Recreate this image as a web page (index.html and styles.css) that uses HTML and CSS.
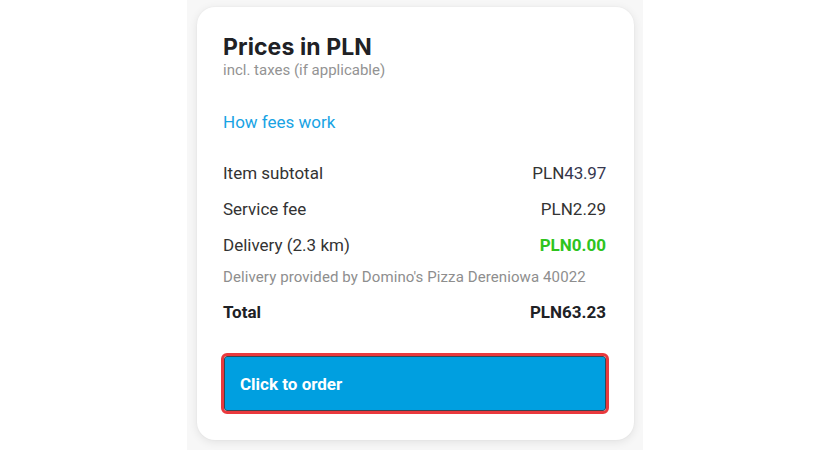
FILE: index.html
```html
<!DOCTYPE html>
<html lang="en">
<head>
<meta charset="utf-8">
<title>Prices in PLN</title>
<link rel="stylesheet" href="styles.css">
</head>
<body>
<div class="panel">
  <section class="card">
    <header class="head">
      <h1 class="title">Prices in PLN</h1>
      <p class="subtitle">incl. taxes (if applicable)</p>
    </header>
    <a class="fees-link" href="#">How fees work</a>
    <div class="rows">
      <div class="row"><span>Item subtotal</span><span>PLN<span class="alt-num">43.97</span></span></div>
      <div class="row"><span>Service fee</span><span>PLN2.29</span></div>
      <div class="row"><span>Delivery (2.3 km)</span><span class="free">PLN0.00</span></div>
      <div class="note">Delivery provided by Domino's Pizza Dereniowa 40022</div>
      <div class="row total"><span>Total</span><span>PLN63.23</span></div>
    </div>
    <button class="order-btn" type="button">Click to order</button>
  </section>
</div>
</body>
</html>
```

FILE: styles.css
```css
html, body {
  margin: 0;
  padding: 0;
  background: #ffffff;
}

body {
  font-family: Roboto, "Liberation Sans", Arial, sans-serif;
  color: #202125;
}

.panel {
  width: 456px;
  height: 450px;
  margin-left: 187px;
  background: #f7f7f7;
  padding: 7px 9px 0 10px;
  box-sizing: border-box;
}

.card {
  width: 437px;
  height: 433px;
  box-sizing: border-box;
  background: #ffffff;
  border-radius: 18px;
  box-shadow: 0 2px 10px rgba(0, 0, 0, 0.09), 0 0 2px rgba(0, 0, 0, 0.05);
  padding: 26px 28px 0 26px;
  display: flex;
  flex-direction: column;
}

.head {
  display: flex;
  flex-direction: column;
}

.title {
  margin: 0;
  font-family: Inter, "Open Sans", sans-serif;
  font-weight: 700;
  font-size: 23px;
  line-height: 28px;
  letter-spacing: 0.1px;
  color: #202125;
}

.subtitle {
  margin: 0;
  font-size: 15px;
  line-height: 18px;
  color: #939393;
}

.fees-link {
  margin-top: 33px;
  font-size: 17px;
  line-height: 20px;
  color: #18a3e4;
  text-decoration: none;
  align-self: flex-start;
}

.rows {
  margin-top: 23px;
  display: flex;
  flex-direction: column;
}

.row {
  display: flex;
  justify-content: space-between;
  padding: 8px 0;
  font-size: 17px;
  line-height: 20px;
  color: #333333;
}

.alt-num {
  color: #36374f;
  letter-spacing: -0.2px;
}

.free {
  color: #2ec41e;
  font-weight: 700;
}

.note {
  padding: 5px 0 8px;
  font-size: 15px;
  line-height: 18px;
  letter-spacing: 0.1px;
  color: #8e8e8e;
}

.total {
  font-weight: 700;
  color: #202125;
}

.order-btn {
  margin-top: 26px;
  margin-left: 1px;
  height: 55px;
  box-sizing: border-box;
  border: 1px solid #3a4550;
  outline: 3px solid #e9393d;
  border-radius: 3px;
  background: #009fe0;
  color: #ffffff;
  font-family: Roboto, "Liberation Sans", Arial, sans-serif;
  font-weight: 700;
  font-size: 17px;
  text-align: left;
  padding: 0 15px;
  cursor: pointer;
}
```
